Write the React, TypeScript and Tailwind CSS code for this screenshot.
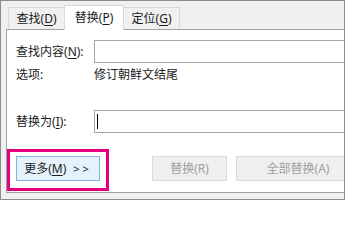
function Key({ k }: { k: string }) {
  return (
    <>
      (<span className="underline underline-offset-2">{k}</span>)
    </>
  );
}

export default function App() {
  return (
    <div className="relative h-[200px] w-[345px] overflow-hidden border border-[#8c8c8c] bg-[#f0f0f0] font-['Noto_Sans','Noto_Sans_CJK_SC',sans-serif] text-[12px] leading-none text-[#1a1a1a]">
      {/* tabs */}
      <div className="relative z-10 flex h-[28px] items-end pl-[7px]">
        <div className="flex h-[22px] w-[56px] items-center justify-center border-l border-t border-[#d9d9d9] bg-[#f0f0f0]">
          查找<Key k="D" />
        </div>
        <div className="-mb-px flex h-[25px] w-[60px] items-center justify-center border-x border-t border-[#d9d9d9] bg-white">
          替换<Key k="P" />
        </div>
        <div className="flex h-[22px] w-[56px] items-center justify-center border-r border-t border-[#d9d9d9] bg-[#f0f0f0]">
          定位<Key k="G" />
        </div>
      </div>

      {/* panel */}
      <div className="ml-[5px] h-[164px] w-[400px] border border-[#a0a0a0] bg-white pl-[9px] pt-[10px]">
        <div className="flex h-[23px] items-center">
          <div className="w-[78px] shrink-0">
            查找内容<Key k="N" />:
          </div>
          <div className="h-[23px] w-[300px] border border-[#a5a5a5] bg-white" />
        </div>

        <div className="mt-[2px] flex h-[20px] items-center">
          <div className="w-[78px] shrink-0">选项:</div>
          <div>修订朝鲜文结尾</div>
        </div>

        <div className="mt-[25px] flex h-[23px] items-center">
          <div className="w-[78px] shrink-0">
            替换为<Key k="I" />:
          </div>
          <div className="flex h-[23px] w-[300px] items-center border border-[#a5a5a5] bg-white">
            <div className="ml-[2px] h-[15px] w-px bg-black" />
          </div>
        </div>

        <div className="mt-[23px] flex h-[25px]">
          <div className="flex w-[84px] items-center justify-center border border-[#7eb4ea] bg-[#e5f1fb]">
            更多<Key k="M" />
            <span className="ml-[7px] tracking-[3px] text-[11px]">&gt;&gt;</span>
          </div>
          <div className="ml-[52px] flex w-[75px] items-center justify-center border border-[#d9d9d9] bg-[#efefef] text-[#a0a0a0]">
            替换(R)
          </div>
          <div className="ml-[9px] flex w-[124px] items-center justify-center border border-[#d9d9d9] bg-[#efefef] text-[#a0a0a0]">
            全部替换(A)
          </div>
        </div>
      </div>

      {/* highlight annotation */}
      <div className="absolute left-[6px] top-[148px] h-[42px] w-[102px] border-[3px] border-[#e5007e]" />
    </div>
  );
}
